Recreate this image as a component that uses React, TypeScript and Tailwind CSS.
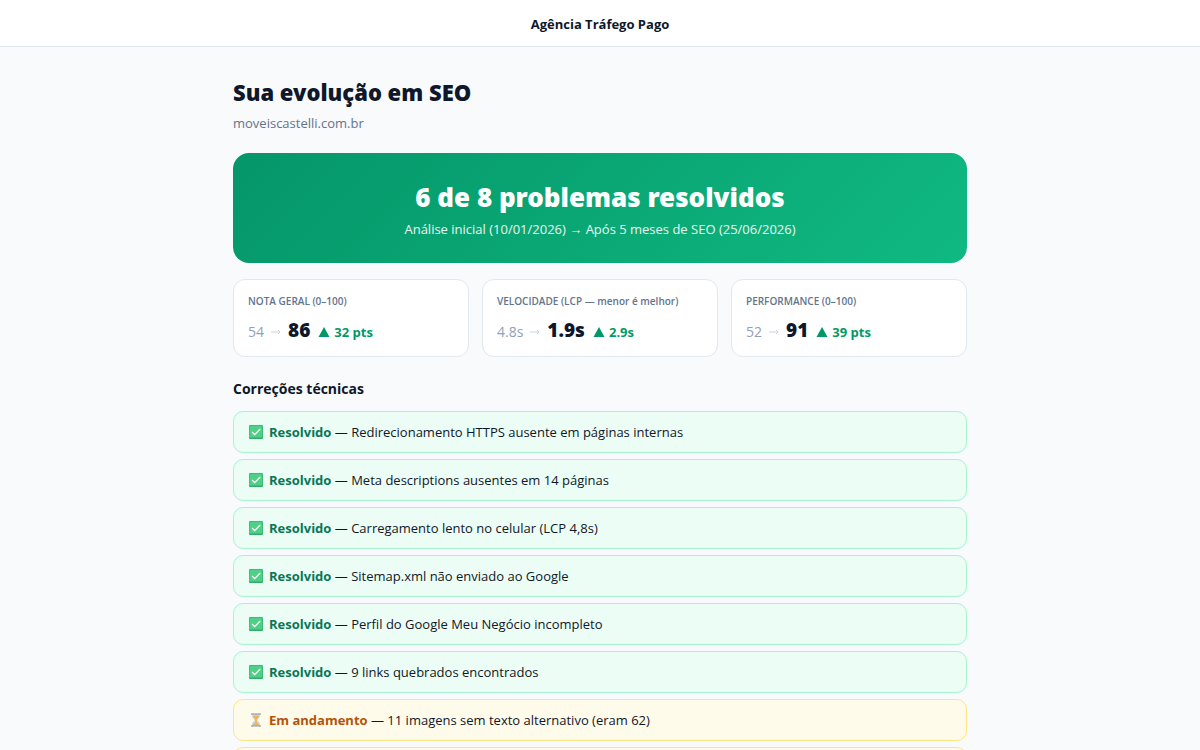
type Metric = { label: string; note?: string; before: string; after: string; delta: string };
type Fix = { done: boolean; text: string };

const metrics: Metric[] = [
  { label: 'NOTA GERAL (0–100)', before: '54', after: '86', delta: '32 pts' },
  { label: 'VELOCIDADE (LCP —', note: 'menor é melhor)', before: '4.8s', after: '1.9s', delta: '2.9s' },
  { label: 'PERFORMANCE (0–100)', before: '52', after: '91', delta: '39 pts' },
];

const fixes: Fix[] = [
  { done: true, text: 'Redirecionamento HTTPS ausente em páginas internas' },
  { done: true, text: 'Meta descriptions ausentes em 14 páginas' },
  { done: true, text: 'Carregamento lento no celular (LCP 4,8s)' },
  { done: true, text: 'Sitemap.xml não enviado ao Google' },
  { done: true, text: 'Perfil do Google Meu Negócio incompleto' },
  { done: true, text: '9 links quebrados encontrados' },
  { done: false, text: '11 imagens sem texto alternativo (eram 62)' },
  { done: false, text: 'Dados estruturados ausentes nos produtos' },
];

function CheckIcon() {
  return (
    <svg className="size-3.5 shrink-0" viewBox="0 0 14 14" aria-hidden="true">
      <rect width="14" height="14" rx="1" fill="#2fae69" />
      <rect x="0.4" y="0.4" width="13" height="12.2" rx="0.6" fill="#4fd086" />
      <path d="M3 7 5.700 9.600 11.200 4" fill="none" stroke="#fff" strokeWidth="1.3" />
    </svg>
  );
}

function HourglassIcon() {
  return (
    <svg className="size-3.5 shrink-0" viewBox="0 0 14 14" aria-hidden="true">
      <path d="M3 1.500h8v1.800c0 1.800-2.600 2.800-2.600 3.700s2.600 1.900 2.600 3.700v1.800H3v-1.800C3 8.900 5.600 7.900 5.600 7S3 5.100 3 3.300z" fill="#c9dde8" />
      <path d="M3.800 2.800h6.400c0 2.100-2.400 2.700-2.400 4.200v2.300l2.700 2.700h-7l2.700-2.700V7C6.200 5.500 3.800 4.900 3.800 2.800z" fill="#efb45a" />
      <rect x="2" y="0.2" width="10" height="1.800" rx="0.4" fill="#a5b4c0" />
      <rect x="2" y="12" width="10" height="1.800" rx="0.4" fill="#a5b4c0" />
    </svg>
  );
}

function MetricCard({ label, note, before, after, delta }: Metric) {
  return (
    <article className="rounded-xl border border-slate-200 bg-white px-3.5 pt-3 pb-2.5">
      <h2 className="text-[10px] leading-[18px] font-semibold whitespace-nowrap text-slate-500">
        {label}
        {note && <span> {note}</span>}
      </h2>
      <p className="mt-1.5 flex items-baseline leading-7">
        <span className="text-[14px] text-slate-400">{before}</span>
        <svg className="mx-1.5 h-2 w-3 self-center" viewBox="0 0 12 8" aria-label="para">
          <path d="M1 5h9M8 3l2 2-2 2" fill="none" stroke="#cbd5e1" />
        </svg>
        <strong className="text-[19px] font-black">{after}</strong>
        <span className="ml-2 flex items-baseline gap-1 text-[13px] font-bold text-emerald-600">
          <svg className="h-2.5 w-3" viewBox="0 0 12 10" aria-hidden="true">
            <path d="M6 0 11.500 10H.5z" fill="currentColor" />
          </svg>
          {delta}
        </span>
      </p>
    </article>
  );
}

function FixRow({ done, text }: Fix) {
  return (
    <li
      className={
        done
          ? 'flex items-center gap-1.5 rounded-[10px] border border-emerald-200 bg-[#ecfdf5] px-[15px] py-2.5 text-[13px] leading-5'
          : 'flex items-center gap-1.5 rounded-[10px] border border-amber-200 bg-[#fffbeb] px-[15px] py-2.5 text-[13px] leading-5'
      }
    >
      {done ? <CheckIcon /> : <HourglassIcon />}
      <span>
        <strong className={done ? 'text-[#047857]' : 'text-[#b45309]'}>{done ? 'Resolvido' : 'Em andamento'}</strong>
        {' — '}
        {text}
      </span>
    </li>
  );
}

export default function App() {
  return (
    <div className="min-h-screen bg-[#f8fafc] font-['Open_Sans','Noto_Sans',sans-serif] text-[#0f172a]">
      <header className="border-b border-slate-200 bg-white px-4 pt-3.5 pb-3 text-center text-[13px] leading-5 font-bold">
        Agência Tráfego Pago
      </header>
      <main className="mx-auto max-w-[766px] px-4 pt-[25px] pb-10">
        <h1 className="font-['Noto_Sans',sans-serif] text-[22px] leading-10 font-black">Sua evolução em SEO</h1>
        <p className="text-[13px] leading-[22px] text-slate-500">moveiscastelli.com.br</p>
        <section className="mt-[19px] rounded-2xl bg-linear-135 from-[#059669] to-[#10b981] px-6 pt-[26px] pb-6 text-center text-white">
          <p className="font-['Noto_Sans',sans-serif] text-[26px] leading-9 font-black">6 de 8 problemas resolvidos</p>
          <p className="mt-1 text-[13px] leading-5 text-white/90">
            Análise inicial (10/01/2026) → Após 5 meses de SEO (25/06/2026)
          </p>
        </section>
        <section className="mt-4 grid grid-cols-3 gap-[13px]">
          {metrics.map((m) => (
            <MetricCard key={m.label} {...m} />
          ))}
        </section>
        <h2 className="mt-5 text-[14px] leading-6 font-bold">Correções técnicas</h2>
        <ul className="mt-2.5 flex flex-col gap-1.5">
          {fixes.map((f) => (
            <FixRow key={f.text} {...f} />
          ))}
        </ul>
      </main>
    </div>
  );
}
